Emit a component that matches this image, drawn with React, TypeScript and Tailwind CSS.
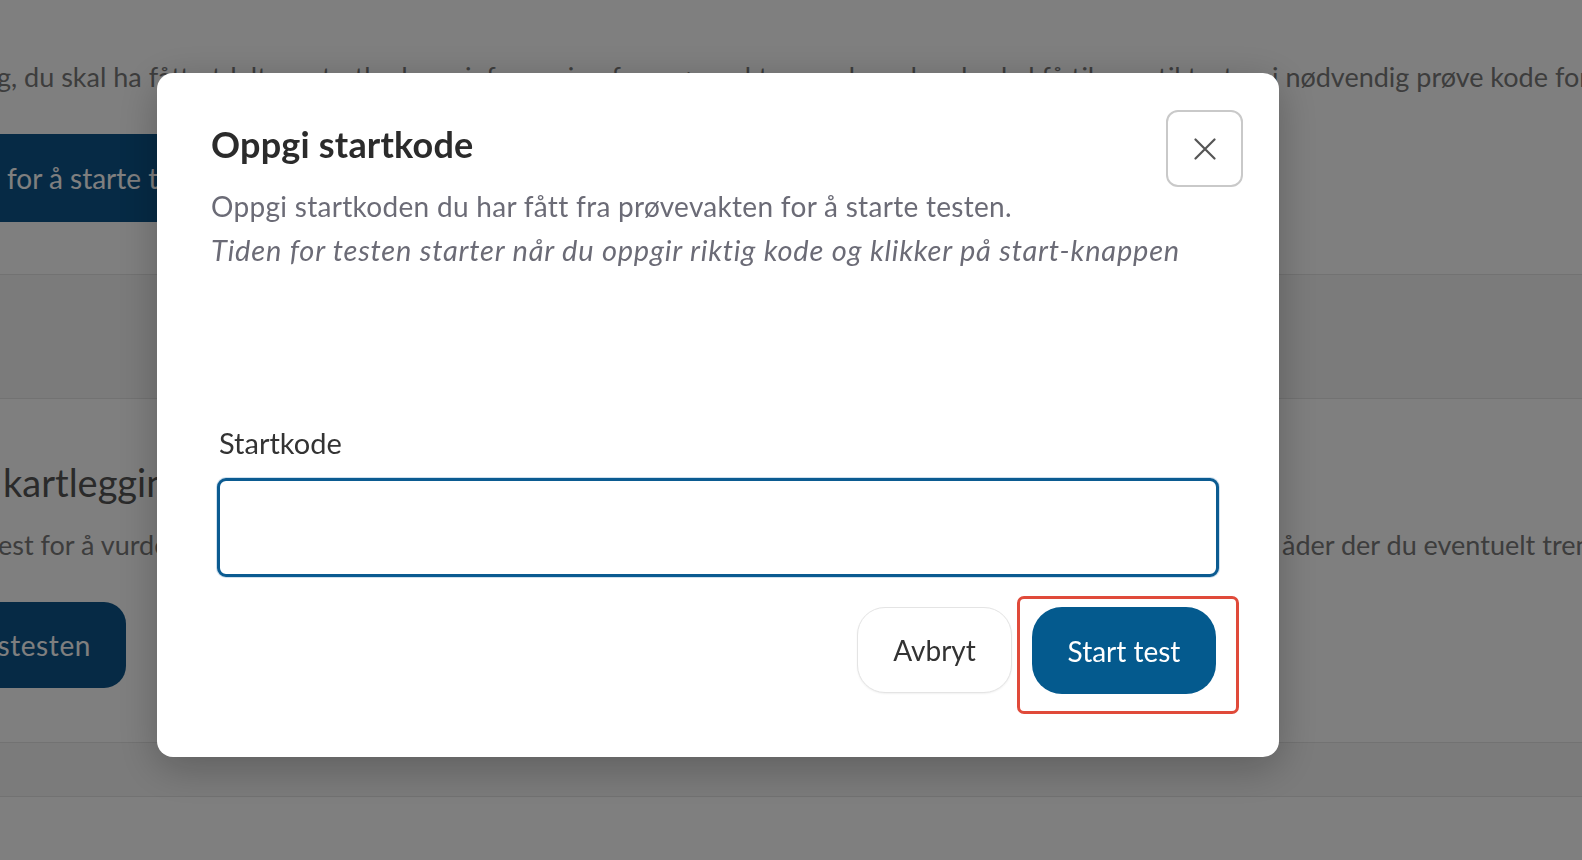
import { useState } from 'react'

const FONT = { fontFamily: 'Lato, "Noto Sans", sans-serif' }

function CloseIcon() {
  return (
    <svg width="22" height="22" viewBox="0 0 22 22" fill="none" stroke="#555" strokeWidth="2.2" strokeLinecap="round">
      <path d="M1.5 1.5l19 19M20.5 1.5l-19 19" />
    </svg>
  )
}

// The page that sits under the dialog; only its edges show
function BackgroundPage() {
  return (
    <div className="flex h-full w-full flex-col overflow-hidden bg-white">
      <section className="h-[275px] shrink-0 border-b border-[#e4e4e4]">
        <div className="-ml-[3px] flex whitespace-nowrap pt-[60px] text-[27px] leading-[34px] text-[#7a7a7a]">
          <span className="w-[1275px] shrink-0 overflow-hidden">
            g, du skal ha fått utdelt en startkode og informasjon fra prøvevakten om hvordan du skal få tilgang til testen
          </span>
          <span>i nødvendig prøve kode for å starte testen</span>
        </div>
        <div className="mt-[40px] flex h-[88px] w-[420px] items-center overflow-hidden bg-[#0c548a]">
          <span className="-ml-[15px] whitespace-nowrap text-[28px] text-white">e for å starte testen</span>
        </div>
      </section>
      <section className="h-[124px] shrink-0 border-b border-[#e4e4e4] bg-[#f7f7f7]" />
      <section className="h-[344px] shrink-0 border-b border-[#e4e4e4]">
        <h2 className="ml-[3px] whitespace-nowrap pt-[60px] text-[38px] leading-[46px] text-[#555]">
          kartleggingstest
        </h2>
        <div className="-ml-[2px] mt-[23px] flex whitespace-nowrap text-[27px] leading-[34px] text-[#7a7a7a]">
          <span className="w-[1284px] shrink-0 overflow-hidden">
            est for å vurdere ferdighetene dine og finne ut hvilke omr
          </span>
          <span>åder der du eventuelt trenger mer opplæring</span>
        </div>
        <div className="mt-[40px] flex h-[86px] w-[126px] items-center justify-end overflow-hidden rounded-r-[22px] bg-[#0c548a] pr-[35px]">
          <span className="shrink-0 whitespace-nowrap text-[28px] tracking-[0.6px] text-white">Start kartleggingstesten</span>
        </div>
      </section>
      <section className="h-[54px] shrink-0 border-b border-[#e4e4e4] bg-[#f7f7f7]" />
    </div>
  )
}

export default function App() {
  const [code, setCode] = useState('')

  return (
    <div className="relative h-screen w-full overflow-hidden" style={FONT}>
      <BackgroundPage />

      {/* Overlay + dialog */}
      <div className="fixed inset-0 bg-black/50 pl-[157px] pt-[73px]">
        <div className="flex h-[684px] w-[1122px] flex-col rounded-[16px] bg-white pl-[54px] pr-[36px] pt-[37px] shadow-[0_10px_40px_rgba(0,0,0,0.25)]">
          <div className="flex items-start justify-between">
            <div className="min-w-0 flex-1 pt-[13px]">
              <h1 className="text-[36px] font-bold leading-[42px] tracking-[0.2px] text-[#2b2b2b]">Oppgi startkode</h1>
              <p className="mt-[20px] whitespace-nowrap text-[28px] leading-[43px] tracking-[0.3px] text-[#6b6b76]">
                Oppgi startkoden du har fått fra prøvevakten for å starte testen.
              </p>
              <p className="whitespace-nowrap text-[29px] italic leading-[43px] tracking-[0.8px] text-[#6b6b76]">
                Tiden for testen starter når du oppgir riktig kode og klikker på start-knappen
              </p>
            </div>
            <button
              aria-label="Lukk"
              className="flex h-[77px] w-[77px] shrink-0 items-center justify-center rounded-[12px] border-[2.5px] border-[#c9c9c9] bg-white"
            >
              <CloseIcon />
            </button>
          </div>

          <div className="ml-[6px] mr-[24px] mt-[156px]">
            <label htmlFor="startkode" className="ml-[2px] block text-[29px] leading-[32px] text-[#333]">
              Startkode
            </label>
            <input
              id="startkode"
              value={code}
              onChange={(e) => setCode(e.target.value)}
              className="mt-[19px] block h-[99px] w-full rounded-[9px] border-[3px] border-[#0b5b91] bg-white px-4 text-[26px] outline-none ring-1 ring-[#cfe0ee]"
            />
          </div>

          <div className="mr-[27px] mt-[30px] flex justify-end gap-[20px]">
            <button className="h-[86px] w-[155px] rounded-[28px] border border-[#e4e4e4] bg-white text-[28px] text-[#333] shadow-[0_1px_2px_rgba(0,0,0,0.06)]">
              Avbryt
            </button>
            <div className="relative">
              <button className="h-[87px] w-[184px] rounded-[30px] bg-[#045a8e] text-[28px] text-white">
                Start test
              </button>
              <span className="pointer-events-none absolute -bottom-[20px] -left-[15px] -right-[23px] -top-[11px] rounded-[7px] border-[3px] border-[#e04a3a]" />
            </div>
          </div>
        </div>
      </div>
    </div>
  )
}
